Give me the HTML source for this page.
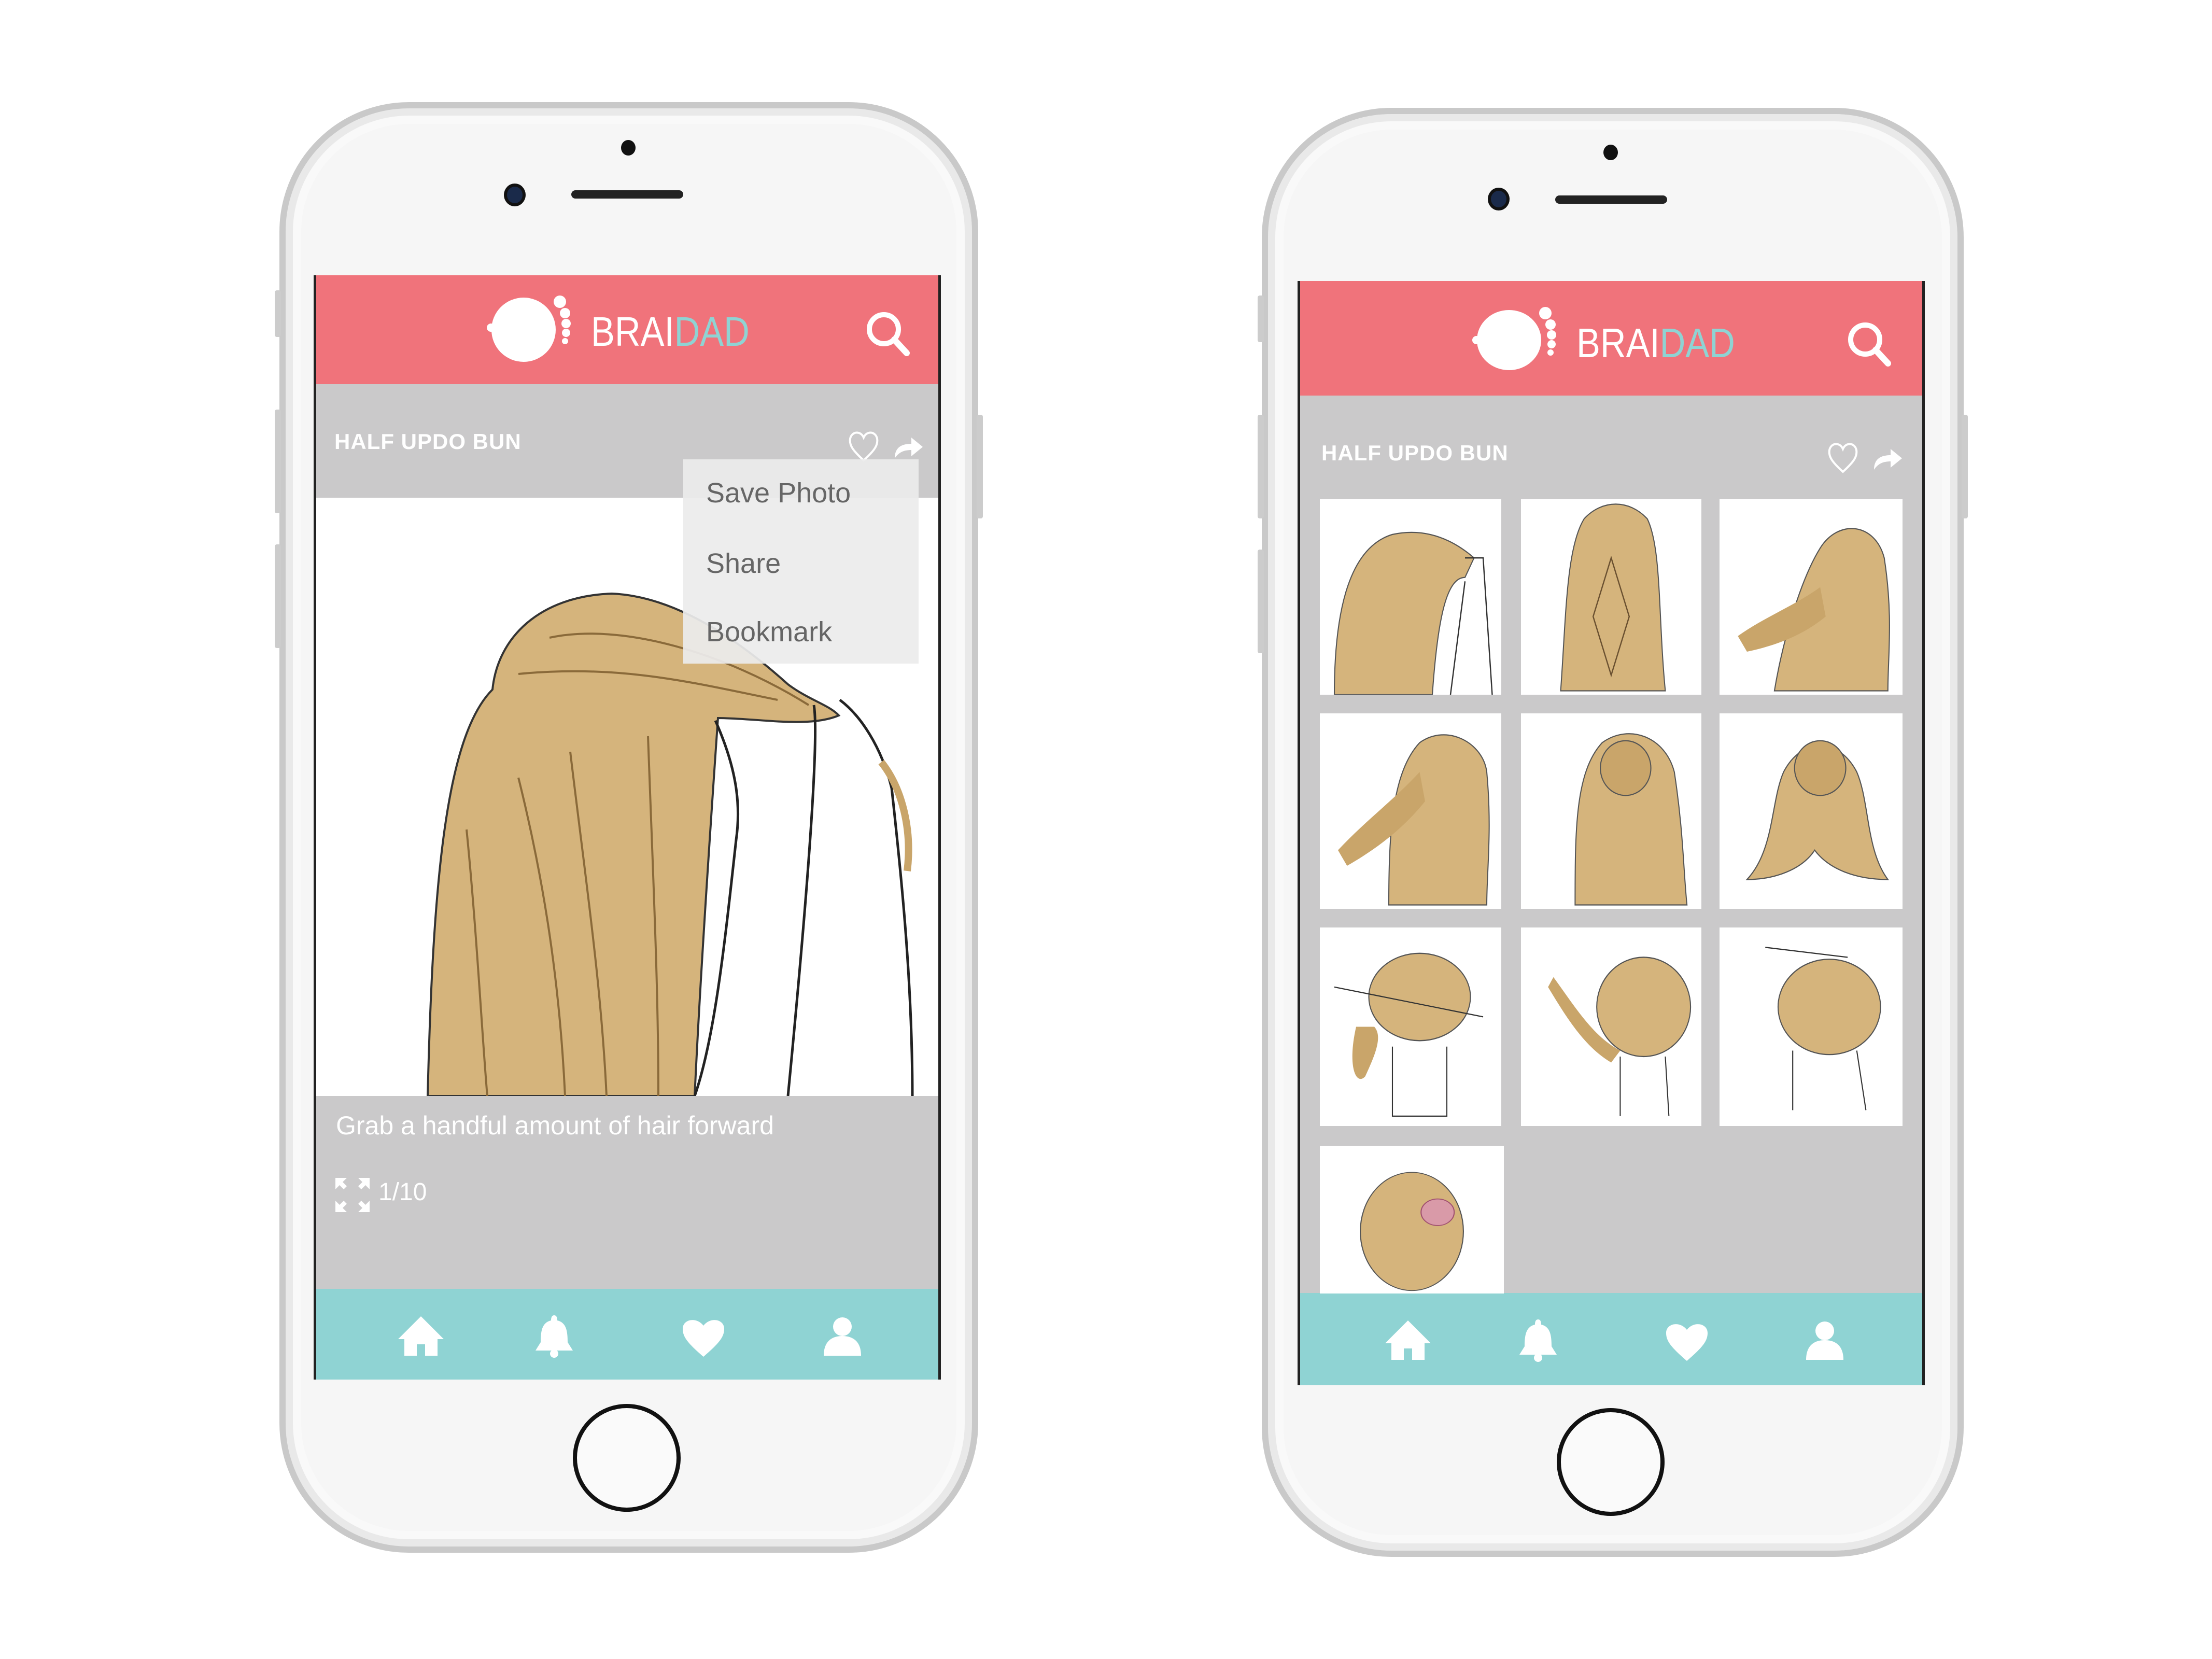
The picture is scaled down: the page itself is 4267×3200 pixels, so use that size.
<!DOCTYPE html>
<html><head><meta charset="utf-8">
<style>
*{margin:0;padding:0;box-sizing:border-box}
body{width:4267px;height:3200px;background:#fff;position:relative;overflow:hidden;font-family:"Liberation Sans",sans-serif}
.abs{position:absolute}
.phone{position:absolute;border-radius:250px;background:#f6f6f6;border:12px solid #c9c9c9;box-shadow:inset 0 0 0 14px #e9e9e9,inset 0 0 0 30px #f9f9f9}
.screen{position:absolute;overflow:hidden;background:#cac9ca;border-left:5px solid #222;border-right:5px solid #222}
.hdr{position:absolute;left:0;right:0;top:0;background:#f0737b}
.tab{position:absolute;left:0;right:0;bottom:0;background:#8fd3d3}
.logo{position:absolute;font-size:80px;letter-spacing:0;color:#fff;line-height:1;transform:scaleX(0.86);transform-origin:0 0}
.logo span{color:#8fd3d3}
.title{position:absolute;color:#fff;font-weight:bold;font-size:42px;letter-spacing:1px}
.home{position:absolute;width:208px;height:208px;border-radius:50%;border:8px solid #111;background:#fafafa}
.dot{position:absolute;border-radius:50%;background:#111}
.spk{position:absolute;height:16px;border-radius:8px;background:#222}
.tile{position:absolute;background:#fff}
.menu div{position:absolute;left:44px;font-size:54px;color:#666}
</style></head><body>

<!-- LEFT PHONE -->
<div class="phone" style="left:539px;top:197px;width:1348px;height:2798px"></div>
<div class="abs" style="left:530px;top:560px;width:12px;height:90px;background:#ccc;border-radius:4px"></div>
<div class="abs" style="left:530px;top:790px;width:12px;height:200px;background:#ccc;border-radius:4px"></div>
<div class="abs" style="left:530px;top:1050px;width:12px;height:200px;background:#ccc;border-radius:4px"></div>
<div class="abs" style="left:1884px;top:800px;width:12px;height:200px;background:#ccc;border-radius:4px"></div>
<div class="dot" style="left:1198px;top:270px;width:28px;height:30px"></div>
<div class="dot" style="left:972px;top:354px;width:42px;height:44px;background:#1a2a4a;border:6px solid #111"></div>
<div class="spk" style="left:1102px;top:367px;width:216px"></div>
<div class="home" style="left:1105px;top:2708px"></div>

<div class="screen" style="left:605px;top:531px;width:1210px;height:2130px">
  <div class="hdr" style="height:210px"></div>
  <div class="abs" style="left:0;top:429px;width:1200px;height:1154px;background:#fff"></div>
  <div class="tab" style="height:175px"></div>
</div>
<svg class="abs" style="left:930px;top:560px" width="200" height="160" viewBox="0 0 200 160">
 <ellipse cx="80" cy="76" rx="62" ry="62" fill="#fff"/><circle cx="17" cy="72" r="8" fill="#fff"/>
 <circle cx="150" cy="22" r="12" fill="#fff"/><circle cx="160" cy="44" r="10" fill="#fff"/><circle cx="162" cy="64" r="9" fill="#fff"/><circle cx="162" cy="82" r="8" fill="#fff"/><circle cx="160" cy="98" r="6" fill="#fff"/>
</svg>
<div class="logo" style="left:1140px;top:600px">BRAI<span>DAD</span></div>
<svg class="abs" style="left:1665px;top:595px" width="100" height="100" viewBox="0 0 100 100">
 <circle cx="40" cy="40" r="28" fill="none" stroke="#fff" stroke-width="10"/><line x1="60" y1="60" x2="84" y2="86" stroke="#fff" stroke-width="12" stroke-linecap="round"/>
</svg>
<div class="title" style="left:645px;top:828px">HALF UPDO BUN</div>
<svg class="abs" style="left:1634px;top:826px" width="150" height="70" viewBox="0 0 150 70">
 <path d="M32 62 C10 42 4 32 6 20 C9 6 26 4 32 18 C38 4 55 6 58 20 C60 32 54 42 32 62Z" fill="none" stroke="#fff" stroke-width="4"/>
 <path d="M92 58 C92 38 104 30 124 30 L124 18 L146 36 L124 54 L124 42 C110 42 100 46 92 58Z" fill="#fff"/>
</svg>
<svg class="abs" style="left:600px;top:960px" width="1210" height="1154" viewBox="600 960 1210 1154">
 <path d="M825 2114 C835 1700 860 1420 950 1330 C960 1230 1040 1150 1180 1145 C1300 1150 1420 1230 1520 1320 C1560 1350 1600 1360 1618 1380 C1560 1405 1460 1385 1385 1385 C1370 1600 1350 1900 1340 2114 Z" fill="#d5b47c" stroke="#333" stroke-width="4"/>
 <path d="M1000 1500 C1050 1700 1080 1900 1090 2114 M900 1600 C920 1800 930 2000 940 2114 M1100 1450 C1130 1700 1160 1900 1170 2114 M1250 1420 C1260 1700 1270 1900 1270 2114 M1060 1230 C1200 1200 1400 1260 1560 1360 M1000 1300 C1200 1280 1350 1320 1500 1350" stroke="#8a6a3a" stroke-width="4" fill="none"/>
 <path d="M1380 1390 C1420 1480 1430 1550 1420 1620 C1400 1800 1380 2000 1340 2114 M1570 1360 C1580 1420 1560 1700 1520 2114 M1620 1350 C1660 1380 1700 1440 1720 1520 C1740 1700 1760 1900 1760 2114" stroke="#222" stroke-width="5" fill="none"/>
 <path d="M1700 1470 C1740 1520 1760 1600 1750 1680" stroke="#c9a56a" stroke-width="14" fill="none"/>
</svg>
<div class="menu abs" style="left:1318px;top:886px;width:454px;height:394px;background:rgba(236,236,236,0.93)">
  <div style="top:34px">Save Photo</div>
  <div style="top:170px">Share</div>
  <div style="top:302px">Bookmark</div>
</div>
<div class="abs" style="left:648px;top:2142px;color:#fff;font-size:50px">Grab a handful amount of hair forward</div>
<svg class="abs" style="left:645px;top:2270px" width="70" height="70" viewBox="0 0 70 70" fill="#fff">
 <path d="M2 2h22l-8 8 8 8-6 6-8-8-8 8z M68 2v22l-8-8-8 8-6-6 8-8-8-8z M2 68v-22l8 8 8-8 6 6-8 8 8 8z M68 68h-22l8-8-8-8 6-6 8 8 8-8z"/>
</svg>
<div class="abs" style="left:730px;top:2272px;color:#fff;font-size:48px">1/10</div>
<svg class="abs" style="left:0;top:0" width="4267" height="3200" viewBox="0 0 4267 3200" fill="#fff">
 <g transform="translate(812 2579)"><path d="M-44 4 L0 -40 L44 4 L32 4 L32 36 L-32 36 L-32 4Z"/><rect x="-8" y="14" width="16" height="22" fill="#8fd3d3"/></g>
 <g transform="translate(1069 2579)"><path d="M0 -42 C-6 -42 -6 -34 -6 -32 C-24 -28 -26 -10 -26 10 L-36 26 L36 26 L26 10 C26 -10 24 -28 6 -32 C6 -34 6 -42 0 -42Z"/><circle cx="0" cy="32" r="8"/></g>
 <g transform="translate(1357 2579)"><path d="M0 38 C-30 12 -40 0 -40 -16 C-40 -34 -14 -40 0 -22 C14 -40 40 -34 40 -16 C40 0 30 12 0 38Z"/></g>
 <g transform="translate(1625 2579)"><circle cx="0" cy="-20" r="18"/><path d="M-36 36 C-36 8 -20 -2 0 -2 C20 -2 36 8 36 36Z"/></g>
</svg>

<!-- RIGHT PHONE -->
<div class="phone" style="left:2434px;top:208px;width:1354px;height:2795px"></div>
<div class="abs" style="left:2426px;top:570px;width:12px;height:90px;background:#ccc;border-radius:4px"></div>
<div class="abs" style="left:2426px;top:800px;width:12px;height:200px;background:#ccc;border-radius:4px"></div>
<div class="abs" style="left:2426px;top:1060px;width:12px;height:200px;background:#ccc;border-radius:4px"></div>
<div class="abs" style="left:3784px;top:800px;width:12px;height:200px;background:#ccc;border-radius:4px"></div>
<div class="dot" style="left:3093px;top:279px;width:28px;height:30px"></div>
<div class="dot" style="left:2870px;top:362px;width:42px;height:44px;background:#1a2a4a;border:6px solid #111"></div>
<div class="spk" style="left:3000px;top:377px;width:216px"></div>
<div class="home" style="left:3003px;top:2716px"></div>

<div class="screen" style="left:2503px;top:542px;width:1210px;height:2130px">
  <div class="hdr" style="height:221px"></div>
  <div class="tab" style="height:178px"></div>
</div>
<svg class="abs" style="left:2831px;top:580px" width="200" height="160" viewBox="0 0 200 160">
 <ellipse cx="80" cy="76" rx="62" ry="58" fill="#fff"/><circle cx="17" cy="76" r="8" fill="#fff"/>
 <circle cx="150" cy="24" r="12" fill="#fff"/><circle cx="160" cy="46" r="10" fill="#fff"/><circle cx="162" cy="66" r="9" fill="#fff"/><circle cx="162" cy="84" r="8" fill="#fff"/><circle cx="160" cy="100" r="6" fill="#fff"/>
</svg>
<div class="logo" style="left:3041px;top:622px">BRAI<span>DAD</span></div>
<svg class="abs" style="left:3558px;top:615px" width="100" height="100" viewBox="0 0 100 100">
 <circle cx="40" cy="40" r="28" fill="none" stroke="#fff" stroke-width="10"/><line x1="60" y1="60" x2="84" y2="86" stroke="#fff" stroke-width="12" stroke-linecap="round"/>
</svg>
<div class="title" style="left:2549px;top:850px">HALF UPDO BUN</div>
<svg class="abs" style="left:3523px;top:848px" width="150" height="70" viewBox="0 0 150 70">
 <path d="M32 62 C10 42 4 32 6 20 C9 6 26 4 32 18 C38 4 55 6 58 20 C60 32 54 42 32 62Z" fill="none" stroke="#fff" stroke-width="4"/>
 <path d="M92 58 C92 38 104 30 124 30 L124 18 L146 36 L124 54 L124 42 C110 42 100 46 92 58Z" fill="#fff"/>
</svg>

<div class="tile" style="left:2546px;top:963px;width:350px;height:377px"><svg width="350" height="377" viewBox="0 0 100 100" preserveAspectRatio="none"><path d="M8 100 C8 60 15 25 40 18 C60 14 75 22 85 30 L80 40 C70 40 65 60 62 100Z" fill="#d5b47c" stroke="#555" stroke-width="0.6"/><path d="M80 30 L90 30 L95 100 M72 100 L80 42" stroke="#333" stroke-width="0.7" fill="none"/></svg></div>
<div class="tile" style="left:2934px;top:963px;width:348px;height:377px"><svg width="348" height="377" viewBox="0 0 100 100" preserveAspectRatio="none"><path d="M22 98 C25 60 25 25 35 10 C45 0 60 0 70 10 C78 25 76 60 80 98Z" fill="#d5b47c" stroke="#555" stroke-width="0.6"/><path d="M50 30 L40 60 L50 90 L60 60Z" fill="none" stroke="#6a5030" stroke-width="0.7"/></svg></div>
<div class="tile" style="left:3317px;top:963px;width:353px;height:377px"><svg width="353" height="377" viewBox="0 0 100 100" preserveAspectRatio="none"><path d="M30 98 C35 70 45 40 55 25 C65 10 85 12 90 30 C95 60 92 80 92 98Z" fill="#d5b47c" stroke="#555" stroke-width="0.6"/><path d="M10 70 C25 60 40 55 55 45 L58 60 C45 70 30 75 15 78Z" fill="#c9a56a"/></svg></div>
<div class="tile" style="left:2546px;top:1376px;width:350px;height:377px"><svg width="350" height="377" viewBox="0 0 100 100" preserveAspectRatio="none"><path d="M38 98 C38 60 40 30 55 15 C70 5 90 15 92 30 C95 60 92 80 92 98Z" fill="#d5b47c" stroke="#555" stroke-width="0.6"/><path d="M10 70 C25 55 40 45 55 30 L58 45 C45 60 30 70 15 78Z" fill="#c9a56a"/></svg></div>
<div class="tile" style="left:2934px;top:1376px;width:348px;height:377px"><svg width="348" height="377" viewBox="0 0 100 100" preserveAspectRatio="none"><path d="M30 98 C30 60 30 30 45 15 C60 5 80 12 85 30 C90 60 90 80 92 98Z" fill="#d5b47c" stroke="#555" stroke-width="0.6"/><circle cx="58" cy="28" r="14" fill="#c9a56a" stroke="#555" stroke-width="0.6"/></svg></div>
<div class="tile" style="left:3317px;top:1376px;width:353px;height:377px"><svg width="353" height="377" viewBox="0 0 100 100" preserveAspectRatio="none"><path d="M15 85 C30 70 28 45 35 30 C45 12 65 12 75 30 C82 45 80 70 92 85 C75 85 60 80 52 70 C45 80 30 85 15 85Z" fill="#d5b47c" stroke="#555" stroke-width="0.6"/><circle cx="55" cy="28" r="14" fill="#c9a56a" stroke="#555" stroke-width="0.6"/></svg></div>
<div class="tile" style="left:2546px;top:1789px;width:350px;height:383px"><svg width="350" height="383" viewBox="0 0 100 100" preserveAspectRatio="none"><ellipse cx="55" cy="35" rx="28" ry="22" fill="#d5b47c" stroke="#555" stroke-width="0.6"/><path d="M20 50 C15 70 20 80 25 75 C30 65 35 55 30 50Z" fill="#c9a56a"/><path d="M8 30 L90 45 M40 60 L40 95 L70 95 L70 60" stroke="#333" stroke-width="0.6" fill="none"/></svg></div>
<div class="tile" style="left:2934px;top:1789px;width:348px;height:383px"><svg width="348" height="383" viewBox="0 0 100 100" preserveAspectRatio="none"><ellipse cx="68" cy="40" rx="26" ry="25" fill="#d5b47c" stroke="#555" stroke-width="0.6"/><path d="M18 25 C30 40 40 55 55 62 L50 68 C35 60 25 45 15 30Z" fill="#c9a56a"/><path d="M55 65 L55 95 M80 65 L82 95" stroke="#333" stroke-width="0.6"/></svg></div>
<div class="tile" style="left:3317px;top:1789px;width:353px;height:383px"><svg width="353" height="383" viewBox="0 0 100 100" preserveAspectRatio="none"><ellipse cx="60" cy="40" rx="28" ry="24" fill="#d5b47c" stroke="#555" stroke-width="0.6"/><path d="M25 10 L70 15 M40 62 L40 92 M75 62 L80 92" stroke="#333" stroke-width="0.6" fill="none"/></svg></div>
<div class="tile" style="left:2546px;top:2210px;width:355px;height:285px"><svg width="355" height="285" viewBox="0 0 100 100" preserveAspectRatio="none"><ellipse cx="50" cy="58" rx="28" ry="40" fill="#d5b47c" stroke="#555" stroke-width="0.6"/><circle cx="64" cy="45" r="9" fill="#d99aa8" stroke="#a05070" stroke-width="0.6"/></svg></div>

<svg class="abs" style="left:0;top:0" width="4267" height="3200" viewBox="0 0 4267 3200" fill="#fff">
 <g transform="translate(2716 2587)"><path d="M-44 4 L0 -40 L44 4 L32 4 L32 36 L-32 36 L-32 4Z"/><rect x="-8" y="14" width="16" height="22" fill="#8fd3d3"/></g>
 <g transform="translate(2967 2587)"><path d="M0 -42 C-6 -42 -6 -34 -6 -32 C-24 -28 -26 -10 -26 10 L-36 26 L36 26 L26 10 C26 -10 24 -28 6 -32 C6 -34 6 -42 0 -42Z"/><circle cx="0" cy="32" r="8"/></g>
 <g transform="translate(3254 2587)"><path d="M0 38 C-30 12 -40 0 -40 -16 C-40 -34 -14 -40 0 -22 C14 -40 40 -34 40 -16 C40 0 30 12 0 38Z"/></g>
 <g transform="translate(3520 2587)"><circle cx="0" cy="-20" r="18"/><path d="M-36 36 C-36 8 -20 -2 0 -2 C20 -2 36 8 36 36Z"/></g>
</svg>
</body></html>
